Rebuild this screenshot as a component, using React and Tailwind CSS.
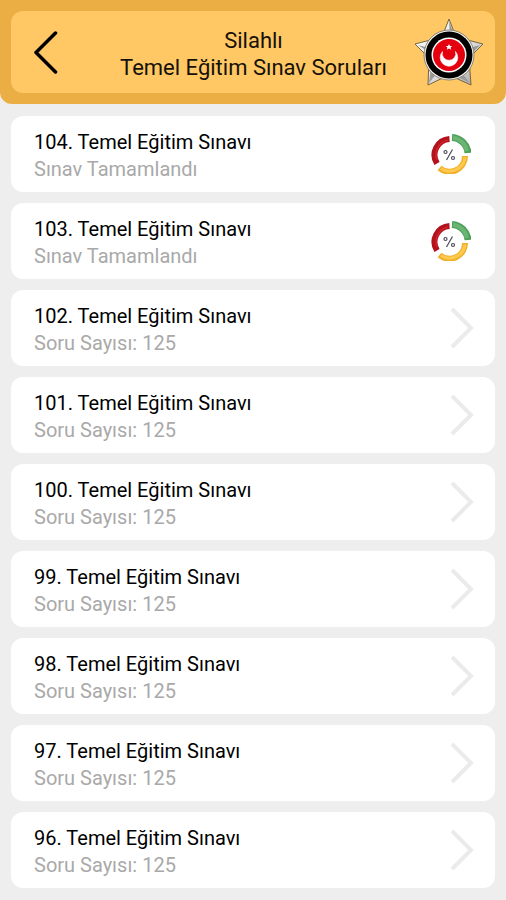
const exams = [
  { no: 104, done: true },
  { no: 103, done: true },
  { no: 102 },
  { no: 101 },
  { no: 100 },
  { no: 99 },
  { no: 98 },
  { no: 97 },
  { no: 96 },
];

function StarBadge() {
  return (
    <svg viewBox="0 0 70 70" className="h-[70px] w-[70px] shrink-0" role="img" aria-label="Amblem">
      <defs>
        <linearGradient id="silver" x1="0" y1="0" x2="1" y2="1">
          <stop offset="0" stopColor="#ffffff" />
          <stop offset="0.5" stopColor="#e9e9e9" />
          <stop offset="1" stopColor="#a5a5a5" />
        </linearGradient>
      </defs>
      <path
        d="M35 2 L42 20 L69 27 L55 41 L57 68 L35 58 L14 68 L15 41 L1 27 L28 20 Z"
        fill="url(#silver)"
        stroke="#75643c"
        strokeWidth="1"
        strokeLinejoin="round"
      />
      <path d="M35 4 L36 20 L41 20 Z M66 28 L52 32 L56 38 Z M56 66 L47 55 L40 58 Z M15 66 L24 55 L17 50 Z M4 28 L19 32 L16 36 Z" fill="#9a9a9a" />
      <circle cx="35" cy="38" r="25" fill="#f0f0f0" stroke="#77715f" strokeWidth="0.8" />
      <circle cx="35" cy="38" r="23.5" fill="#000" />
      <circle cx="35" cy="38" r="17.5" fill="#fff" />
      <circle cx="35" cy="38" r="16" fill="#e5000f" />
      <path d="M28.500 34.500 A8.800 8.800 0 1 0 41.500 34.500 A6.800 6.800 0 1 1 28.500 34.500 Z" fill="#fff" stroke="#fff" strokeWidth="0.6" />
      <path d="M35 27 l1 2 2.2 .1 -1.6 1.5 .6 2.1 -2.2 -1.1 -2.2 1.1 .6 -2.1 -1.6 -1.5 2.2 -.1 Z" fill="#fff" />
    </svg>
  );
}

function ResultRing() {
  return (
    <svg viewBox="0 0 40 40" className="mr-1 h-10 w-10 shrink-0" role="img" aria-label="Sonuç yüzdesi">
      <g fill="none">
        <path d="M18.500 5 A16 16 0 0 0 6 29.500" stroke="#b3121d" strokeWidth="6" />
        <path d="M17 6 A15 15 0 0 0 6 26" stroke="#d0222d" strokeWidth="1.500" />
        <path d="M21 3.500 A17 17 0 0 1 37 19" stroke="#4f9f5c" strokeWidth="7" />
        <path d="M22 3.500 A17 17 0 0 1 36 17" stroke="#6bb573" strokeWidth="4" />
        <path d="M34 22 A15.500 15.500 0 0 1 8.500 34" stroke="#efb02c" strokeWidth="6" />
        <path d="M34 23.500 A15.500 15.500 0 0 1 10 34.500" stroke="#ffc94d" strokeWidth="3" />
      </g>
      <g fill="none" stroke="#4a4c58" strokeWidth="1.200">
        <path d="M21.500 15.500 L15.500 26" />
        <circle cx="14.500" cy="18" r="1.500" />
        <circle cx="22" cy="24" r="1.500" />
      </g>
    </svg>
  );
}

function NextArrow() {
  return (
    <svg viewBox="0 0 26 44" className="h-11 w-[26px] shrink-0" aria-hidden="true">
      <path d="M3 3 L22 22 L3 41" fill="none" stroke="#ebebeb" strokeWidth="4" />
    </svg>
  );
}

export default function App() {
  return (
    <div className="min-h-screen bg-[#eeeeee] pb-3 font-['Roboto','Liberation_Sans',sans-serif]">
      <header className="rounded-b-xl bg-[#ebae45] px-[11px] pt-[11px] pb-[11px]">
        <div className="flex h-[82px] items-center justify-between rounded-xl bg-[#ffc864] pr-[11px] pl-[22px]">
          <button type="button" aria-label="Geri" className="w-[60px] shrink-0">
            <svg viewBox="0 0 26 44" className="h-11 w-[26px]" aria-hidden="true">
              <path
                d="M22.500 3 L3 22.500 L22.500 42"
                fill="none"
                stroke="#000"
                strokeWidth="3.500"
                strokeLinecap="round"
                strokeLinejoin="round"
              />
            </svg>
          </button>
          <h1 className="pt-1 text-center text-[22px] leading-[27px] text-[#15110a]">
            Silahlı
            <br />
            Temel Eğitim Sınav Soruları
          </h1>
          <StarBadge />
        </div>
      </header>

      <ul className="flex flex-col gap-[11px] px-[11px] pt-3">
        {exams.map((exam) => (
          <li key={exam.no}>
            <button
              type="button"
              className="flex h-[76px] w-full items-center justify-between rounded-xl bg-white pr-5 pl-[23px] text-left"
            >
              <span className="flex flex-col pt-1 text-[20px] leading-[27px]">
                <span className="text-black">{exam.no}. Temel Eğitim Sınavı</span>
                <span className="text-[#a9a9a9]">{exam.done ? "Sınav Tamamlandı" : "Soru Sayısı: 125"}</span>
              </span>
              {exam.done ? <ResultRing /> : <NextArrow />}
            </button>
          </li>
        ))}
      </ul>
    </div>
  );
}
